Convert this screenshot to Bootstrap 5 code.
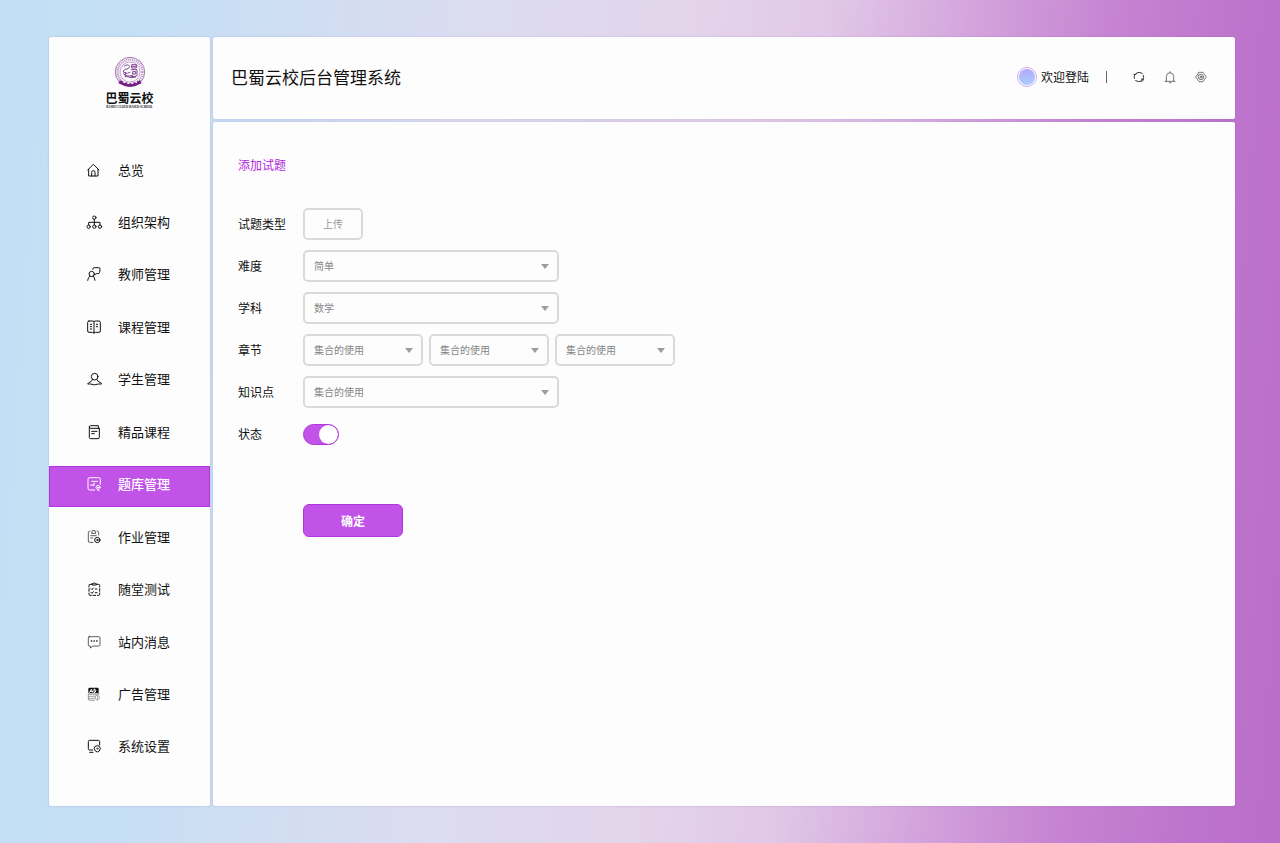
<!DOCTYPE html>
<html lang="zh-CN">
<head>
<meta charset="utf-8">
<meta name="viewport" content="width=device-width, initial-scale=1">
<title>巴蜀云校后台管理系统</title>
<link href="https://cdn.jsdelivr.net/npm/bootstrap@5.3.0/dist/css/bootstrap.min.css" rel="stylesheet">
<style>
:root { --accent: #c253e8; --accent-dark: #b136dc; --panel: #fdfdfd; }
body {
  font-family: "Noto Sans CJK SC", sans-serif;
  font-size: 12px; line-height: 18px; color: #111;
  padding: 37px 45px 37px 49px;
  background: linear-gradient(94deg, #c1e0f5 0%, #c6dff4 13%, #dcdcf0 36%, #e3d4ea 52%, #e1c8e7 62%, #d3a3dc 73%, #c684d2 83%, #bd74cc 93%, #bb6dc9 100%);
}
.shell, .stack { gap: 3px; }
.panel { background: var(--panel); border-radius: 2px; box-shadow: 0 0 2px rgba(110, 80, 200, .35); }
.side { width: 161px; padding: 19px 0 37px; }
.brand { height: 95px; color: #111; }
.brand-name { font-size: 12px; line-height: 14px; font-weight: 700; margin-top: 3px; }
.brand-sub { font: 700 3px/4px "Liberation Serif", serif; }
.side-link {
  height: 41px; padding: 0 0 4px 38px; gap: 17px;
  font-size: 13px; line-height: 20px; color: #111;
}
.side-link.active { background: var(--accent); color: #fff; font-weight: 500; box-shadow: inset 0 0 0 1px var(--accent-dark); }
.ico { width: 14px; height: 14px; overflow: visible; fill: none; stroke: currentColor; stroke-width: 3; stroke-linecap: round; stroke-linejoin: round; flex: none; }
.top-bar { height: 82px; padding: 0 28px 2px 18px; }
.top-bar h1 { font-size: 17px; line-height: 26px; font-weight: 400; }
.top-bar .ico { display: block; width: 12px; height: 12px; color: #333; }
.avatar { width: 20px; height: 20px; border: 1px solid #d9a5f0; padding: 1px; }
.avatar span { background: linear-gradient(#b3a8fb, #a9d0fd); }
.divider { width: 1px; height: 12px; background: #666; margin: 0 26px 0 17px; }
.tools { gap: 19px; }
.work { padding: 34px 25px; }
.crumb { color: #b41fe0; font-size: 12px; line-height: 18px; font-weight: 400; margin-bottom: 34px; }
.form-grid { gap: 10px; }
.field { min-height: 32px; }
.field > label { width: 65px; }
.box, .box:focus {
  height: 32px; width: 120px; padding: 0 24px 0 9px;
  border: 2px solid #dadada; border-radius: 5px;
  font-size: 10px; line-height: 16px; color: #868686; background-color: var(--panel);
}
select.box {
  background-image: url("data:image/svg+xml,%3Csvg xmlns='http://www.w3.org/2000/svg' viewBox='0 0 8 5'%3E%3Cpath d='M0 0h8L4 5z' fill='%239c9c9c'/%3E%3C/svg%3E");
  background-size: 8px 5px; background-position: right 8px center;
}
select.box.wide { width: 256px; }
button.box { width: 60px; padding: 0; color: #999; }
.trio { gap: 6px; }
.form-switch .form-check-input.toggle {
  width: 36px; height: 21px; margin: 0; float: none;
  background-color: var(--accent); border-color: var(--accent-dark); box-shadow: none;
  --bs-form-switch-bg: url("data:image/svg+xml,%3Csvg xmlns='http://www.w3.org/2000/svg' viewBox='0 0 20 20'%3E%3Ccircle cx='10' cy='10' r='10' fill='%23fff'/%3E%3C/svg%3E");
}
.submit, .submit:hover {
  width: 100px; height: 33px; padding: 0; margin: 54px 0 0 65px;
  background: var(--accent); border: 1px solid var(--accent-dark); border-radius: 6px;
  color: #fff; font-size: 12px; font-weight: 700;
}
</style>
</head>
<body class="min-vh-100 d-flex">
<div class="shell d-flex flex-grow-1">
  <aside class="side panel d-flex flex-column flex-shrink-0">
    <a href="#" class="brand d-flex flex-column align-items-center text-decoration-none flex-shrink-0">
      <svg width="32" height="32" viewBox="0 0 96 96" fill="none" stroke="#a873b4" aria-hidden="true">
        <circle cx="48" cy="48" r="44" stroke-width="3"/>
        <circle cx="48" cy="48" r="37" stroke-width="8" stroke-dasharray="3 3" opacity=".8"/>
        <circle cx="48" cy="48" r="30" stroke-width="2"/>
        <path d="M18 73q30 17 60 0l5 9q-35 20-70 0z" fill="#742285" stroke="none"/>
        <path d="M28 79h6m6 3h6m6 0h6m6-3h5" stroke="#fff" stroke-width="4"/>
        <path d="M30 31q12-9 17 1-2 8-13 8-9 2-5 9 12 7 20-1M28 53q12 12 30 4M53 26h14v10H53zm0 5h14M51 41h18v18q-9 5-19 2M56 47h9v7h-9zM32 62h9q8 6 25 1M34 48v13" stroke="#7d4490" stroke-width="3"/>
      </svg>
      <span class="brand-name">巴蜀云校</span>
      <span class="brand-sub">BASHU CLOUD-BASED SCHOOL</span>
    </a>
    <nav class="d-flex flex-column justify-content-between flex-grow-1" aria-label="主导航">
      <a class="side-link d-flex align-items-center text-decoration-none" href="#"><svg class="ico" viewBox="0 0 42 42"><path d="M2 21 19 4l17 17M5 19v20h28V19M14 39V28q0-5 5-5t5 5v11"/></svg>总览</a>
      <a class="side-link d-flex align-items-center text-decoration-none" href="#"><svg class="ico" viewBox="0 0 42 42"><circle cx="22" cy="8" r="5"/><circle cx="5" cy="35" r="5"/><circle cx="22" cy="35" r="5"/><circle cx="39" cy="35" r="5"/><path d="M22 13v17M5 30v-8h34v8"/></svg>组织架构</a>
      <a class="side-link d-flex align-items-center text-decoration-none" href="#"><svg class="ico" viewBox="0 0 42 42"><circle cx="14" cy="21" r="8"/><path d="M2 40q1-9 7-13M24 40q-1-8-5-13M17 7q0-5 5-5h13q5 0 4 5l-1 9q-1 4-5 4h-5l-4 3"/></svg>教师管理</a>
      <a class="side-link d-flex align-items-center text-decoration-none" href="#"><svg class="ico" viewBox="0 0 42 42"><path d="M21 5v34M6 3h11q4 0 4 3 0-3 4-3h11q4 0 4 4v26q0 4-4 4H25q-4 0-4 3 0-3-4-3H6q-4 0-4-4V7q0-4 4-4z"/><path d="M10 13h4M10 20h4M10 27h4M28 13h4M28 20h4"/></svg>课程管理</a>
      <a class="side-link d-flex align-items-center text-decoration-none" href="#"><svg class="ico" viewBox="0 0 42 42"><circle cx="23" cy="14" r="10"/><path d="M16 23 13 28Q2 33 2 36h9q11 5 23 0h10q0-4-11-8l-3-5"/></svg>学生管理</a>
      <a class="side-link d-flex align-items-center text-decoration-none" href="#"><svg class="ico" viewBox="0 0 42 42"><path d="M37 10H11q-4 0-4-4 0-4 4-4h23v7M7 6v31q0 4 4 4h22q4 0 4-4V10M14 19h16M14 26h8"/></svg>精品课程</a>
      <a class="side-link active d-flex align-items-center text-decoration-none" href="#" aria-current="page"><svg class="ico" viewBox="0 0 42 42"><path d="M23 39H8q-5 0-5-5V7q0-5 5-5h27q5 0 5 5v15M14 13h18M10 24h12M22 18l-4 8"/><circle cx="33" cy="31" r="6"/><path d="m31 30 2 3 4-4M32 39l4 2"/></svg>题库管理</a>
      <a class="side-link d-flex align-items-center text-decoration-none" href="#"><svg class="ico" viewBox="0 0 42 42"><path d="M9 3Q4 3 4 8v25q0 4 4 4h10M30 3q5 0 5 5v7M14 9l2-7h8l2 7zM11 17h17M11 24h6" stroke-width="2"/><circle cx="31" cy="30" r="8"/><circle cx="31" cy="30" r="2"/></svg>作业管理</a>
      <a class="side-link d-flex align-items-center text-decoration-none" href="#"><svg class="ico" viewBox="0 0 42 42"><path d="M15 7H9q-3 0-3 3v5M6 20v8M6 33v4q0 3 3 3h4M18 40h8M31 40h4q3 0 3-3v-4M38 28v-8M38 15v-5q0-3-3-3h-6M16 9h12V5h-4l-2-3-2 3h-4zM12 20l3 3 4-5M25 21h5M12 31l3 3 4-5M25 32h5"/></svg>随堂测试</a>
      <a class="side-link d-flex align-items-center text-decoration-none" href="#"><svg class="ico" viewBox="0 0 42 42"><path d="M7 5h28q4 0 4 4v20q0 4-4 4H18l-8 6v-6H7q-3 0-3-4V9q0-4 3-4z" stroke-width="2"/><path d="M13 18h1M21 18h1M29 18h1" stroke-width="4"/></svg>站内消息</a>
      <a class="side-link d-flex align-items-center text-decoration-none" href="#"><svg class="ico" viewBox="0 0 42 42"><path d="M8 2h23q4 0 4 4v13H4V6q0-4 4-4z" fill="currentColor" stroke="none"/><path d="m8 16 5-9 4 9M10 13h6M21 7v9h3q6-4 0-9z" stroke="#fff"/><path d="M4 23h25M4 29h18M4 35h18M4 23v13q0 4 4 4h14M35 19v5M25 28v8l7 4V24zM36 28q4 4 0 8" stroke-width="2" stroke="#777"/></svg>广告管理</a>
      <a class="side-link d-flex align-items-center text-decoration-none" href="#"><svg class="ico" viewBox="0 0 42 42"><path d="M17 33H8q-4 0-4-4V8q0-4 4-4h26q4 0 4 4v10M8 40h10"/><path d="m25 22 6-2 6 2 3 7-3 7-6 3-6-3-3-7z"/><circle cx="31" cy="29" r="2" stroke-width="2"/></svg>系统设置</a>
    </nav>
  </aside>
  <div class="stack d-flex flex-column flex-grow-1">
    <header class="top-bar panel d-flex align-items-center justify-content-between">
      <h1 class="m-0">巴蜀云校后台管理系统</h1>
      <div class="d-flex align-items-center">
        <span class="avatar rounded-circle d-flex me-1"><span class="rounded-circle flex-grow-1"></span></span>
        <span>欢迎登陆</span>
        <span class="divider"></span>
        <div class="tools d-flex">
          <button type="button" class="border-0 bg-transparent p-0" aria-label="刷新"><svg class="ico" viewBox="0 0 36 36"><path d="M9 7q9-7 19 0M31 13q3 7-1 13M26 30q-9 5-18-1M4 22q-2-7 2-12M32 27l-5-3M27 31v-7M3 10h6"/></svg></button>
          <button type="button" class="border-0 bg-transparent p-0" aria-label="通知"><svg class="ico" viewBox="0 0 36 36"><path d="M3 31h30M7 31V17Q7 6 18 5q11 1 11 12v14M18 5V2M16 35h5" stroke-width="2"/></svg></button>
          <button type="button" class="border-0 bg-transparent p-0" aria-label="设置"><svg class="ico" viewBox="0 0 36 36"><path d="M12 4h12l4 6 6 8-6 8-4 6H12l-4-6-6-8 6-8zM13 11l5-1 6 3 2 5-2 6-6 2-6-2-2-6z" stroke-width="2"/><circle cx="18" cy="18" r="3" stroke-width="2"/></svg></button>
        </div>
      </div>
    </header>
    <main class="work panel flex-grow-1">
      <h2 class="crumb">添加试题</h2>
      <form>
        <div class="form-grid d-flex flex-column">
          <div class="field d-flex align-items-center"><label for="upload">试题类型</label><button type="button" id="upload" class="box">上传</button></div>
          <div class="field d-flex align-items-center"><label for="level">难度</label><select id="level" class="form-select box wide"><option>简单</option></select></div>
          <div class="field d-flex align-items-center"><label for="subject">学科</label><select id="subject" class="form-select box wide"><option>数学</option></select></div>
          <div class="field d-flex align-items-center"><label for="chapter">章节</label>
            <div class="trio d-flex">
              <select id="chapter" class="form-select box"><option>集合的使用</option></select>
              <select class="form-select box" aria-label="章节第二级"><option>集合的使用</option></select>
              <select class="form-select box" aria-label="章节第三级"><option>集合的使用</option></select>
            </div>
          </div>
          <div class="field d-flex align-items-center"><label for="point">知识点</label><select id="point" class="form-select box wide"><option>集合的使用</option></select></div>
          <div class="field form-switch p-0 d-flex align-items-center"><label for="state">状态</label><input id="state" class="form-check-input toggle" type="checkbox" role="switch" checked></div>
        </div>
        <button type="submit" class="btn submit">确定</button>
      </form>
    </main>
  </div>
</div>
<script src="https://cdn.jsdelivr.net/npm/bootstrap@5.3.0/dist/js/bootstrap.bundle.min.js"></script>
</body>
</html>
